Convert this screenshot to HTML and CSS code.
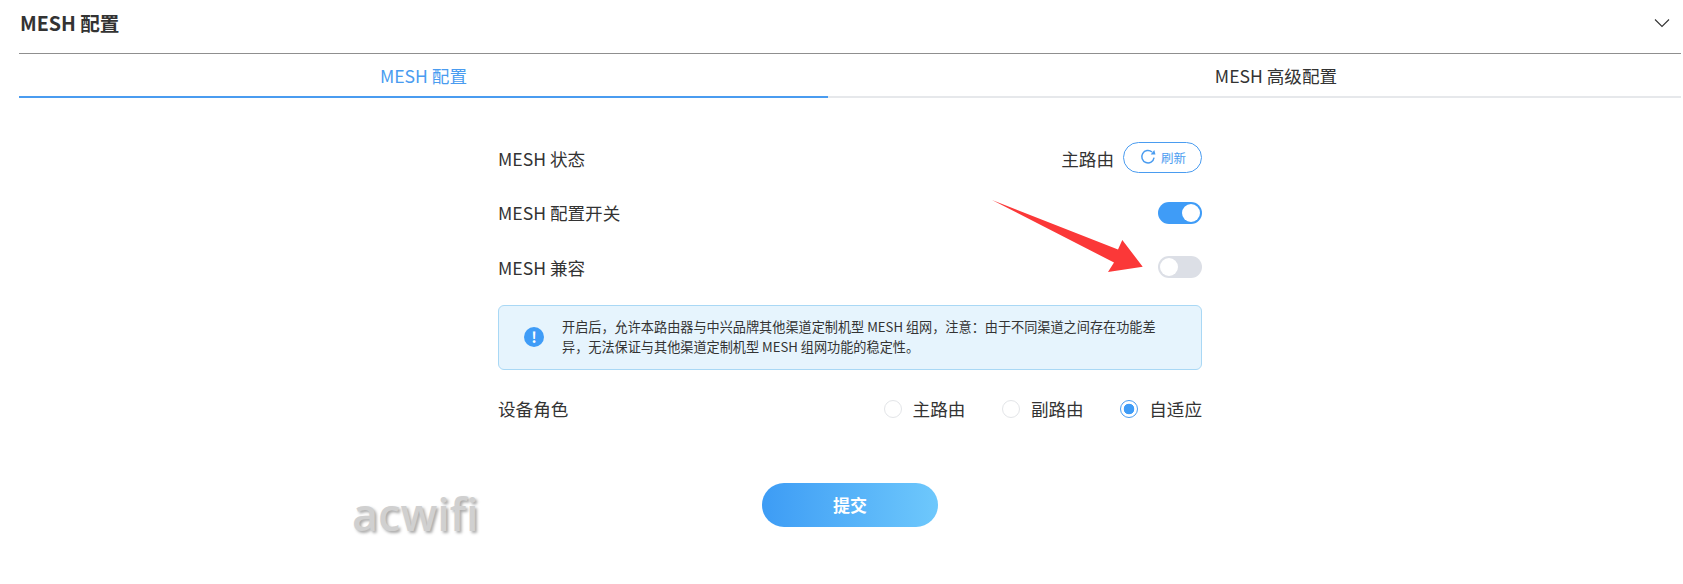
FILE: index.html
```html
<!DOCTYPE html>
<html lang="zh-CN">
<head>
    <meta charset="UTF-8">
    <title>MESH 配置</title>
    <link rel="stylesheet" href="styles.css">
</head>
<body>
<div class="page">
    <div class="panel-head">
        <h3>MESH 配置</h3>
        <svg class="chevron" width="16" height="10" viewBox="0 0 16 10"><path d="M1 1.5 L8 8.5 L15 1.5" fill="none" stroke="#333" stroke-width="1.1"/></svg>
    </div>
    <ul class="tabs">
        <li class="tab active">MESH 配置</li>
        <li class="tab">MESH 高级配置</li>
    </ul>
    <div class="form">
        <div class="row">
            <span>MESH 状态</span>
            <div class="status">
                <span>主路由</span>
                <a href="#" class="refresh">
                    <svg width="18" height="18" viewBox="0 0 16 16"><path d="M13.4 8.6 A5.5 5.5 0 1 1 11.6 3.6" fill="none" stroke="#4a9cf0" stroke-width="1.3"/><path d="M10.4 5.8 L14.6 5.8 L13.6 1.8 Z" fill="#4a9cf0"/></svg>
                    刷新
                </a>
            </div>
        </div>
        <div class="row">
            <span>MESH 配置开关</span>
            <span class="switch on"></span>
        </div>
        <div class="row">
            <span>MESH 兼容</span>
            <span class="switch"></span>
        </div>
        <div class="notice">
            <span class="notice-icon">!</span>
            <p>开启后&#xFF0C;允许本路由器与中兴品牌其他渠道定制机型 MESH 组网&#xFF0C;注意&#xFF1A;由于不同渠道之间存在功能差异&#xFF0C;无法保证与其他渠道定制机型 MESH 组网功能的稳定性。</p>
        </div>
        <div class="row">
            <span>设备角色</span>
            <div class="radios">
                <label class="radio"><i></i>主路由</label>
                <label class="radio"><i></i>副路由</label>
                <label class="radio checked"><i></i>自适应</label>
            </div>
        </div>
        <a href="#" class="submit">提交</a>
    </div>
    <div class="watermark">acwifi</div>
    <svg class="arrow" width="160" height="80" viewBox="0 0 160 80"><path d="M0 0 L126 49.5 L130.3 40 L150.7 66.7 L116 72 L122 62.5 Z" fill="#fb3838"/></svg>
</div>
</body>
</html>
```

FILE: styles.css
```css
*{
    padding:0;
    margin:0;
    box-sizing: border-box;
}
ul,ol{
    list-style: none;
}
a{
    text-decoration: none;
}
body{
    background: #fff;
    color: #333;
    font-family: "Noto Sans CJK SC", "Noto Sans", sans-serif;
    font-size: 17.6px;
}
.page{
    position: relative;
    height: 584px;
    overflow: hidden;
    padding: 0 2px 0 19px;
}
.panel-head{
    display: flex;
    justify-content: space-between;
    align-items: center;
    height: 54px;
    padding: 0 11px 8px 1px;
    border-bottom: 1px solid #8f8f8f;
}
.panel-head h3{
    font-size: 19.6px;
    font-weight: 700;
    line-height: 30px;
}
.tabs{
    display: flex;
    height: 44px;
    border-bottom: 2px solid #e6e8eb;
}
.tab{
    flex: 1;
    height: 44px;
    padding-left: 43px;
    line-height: 43px;
    text-align: center;
}
.tab.active{
    flex: none;
    width: 809px;
    padding-left: 0;
    color: #4a9cf0;
    border-bottom: 2px solid #4a9cf0;
}
.form{
    width: 704px;
    margin: 33px auto 0;
}
.row{
    display: flex;
    justify-content: space-between;
    align-items: center;
    height: 54.5px;
}
.status{
    display: flex;
    align-items: center;
    gap: 9px;
}
.refresh{
    display: flex;
    align-items: center;
    justify-content: center;
    gap: 4px;
    width: 79px;
    height: 31px;
    margin-top: -2px;
    border: 1px solid #4a9cf0;
    border-radius: 16px;
    color: #4a9cf0;
    font-size: 12.5px;
}
.switch{
    position: relative;
    width: 44px;
    height: 22px;
    border-radius: 11px;
    background: #dcdfe6;
}
.switch::after{
    content: "";
    position: absolute;
    top: 2px;
    left: 2px;
    width: 18px;
    height: 18px;
    border-radius: 50%;
    background: #fff;
}
.switch.on{
    background: #3f9cf7;
}
.switch.on::after{
    left: 24px;
}
.notice{
    display: flex;
    align-items: center;
    gap: 18px;
    height: 65px;
    margin: 10px 0 12px;
    padding: 0 36px 0 25px;
    border: 1px solid #a9d8f5;
    border-radius: 6px;
    background: #e6f4fd;
}
.notice p{
    flex: 1;
    font-size: 13.15px;
    line-height: 20px;
}
.notice-icon{
    flex: none;
    width: 20px;
    height: 20px;
    border-radius: 50%;
    background: #3f9cf7;
    color: #fff;
    font-size: 15px;
    font-weight: 700;
    line-height: 20px;
    text-align: center;
}
.radios{
    display: flex;
    gap: 36.5px;
}
.radio{
    display: flex;
    align-items: center;
    gap: 11px;
}
.radio i{
    width: 18px;
    height: 18px;
    border: 1px solid #e3e5e8;
    border-radius: 50%;
}
.radio.checked i{
    border-color: #4a9cf0;
    background: radial-gradient(circle, #3f9cf7 0, #3f9cf7 5px, #fff 5.6px);
}
.submit{
    display: block;
    width: 176px;
    height: 44px;
    margin: 47px auto 0;
    border-radius: 22px;
    background: linear-gradient(90deg, #3d9cf5, #6ec8fc);
    color: #fff;
    font-size: 17px;
    font-weight: 700;
    line-height: 44px;
    text-align: center;
}
.watermark{
    position: absolute;
    left: 352px;
    top: 483px;
    color: #d0d0d0;
    font-family: "Open Sans", sans-serif;
    font-size: 45px;
    font-weight: 600;
    text-shadow: 2px 2px 3px #aaa;
}
.arrow{
    position: absolute;
    left: 992px;
    top: 200px;
}
```
